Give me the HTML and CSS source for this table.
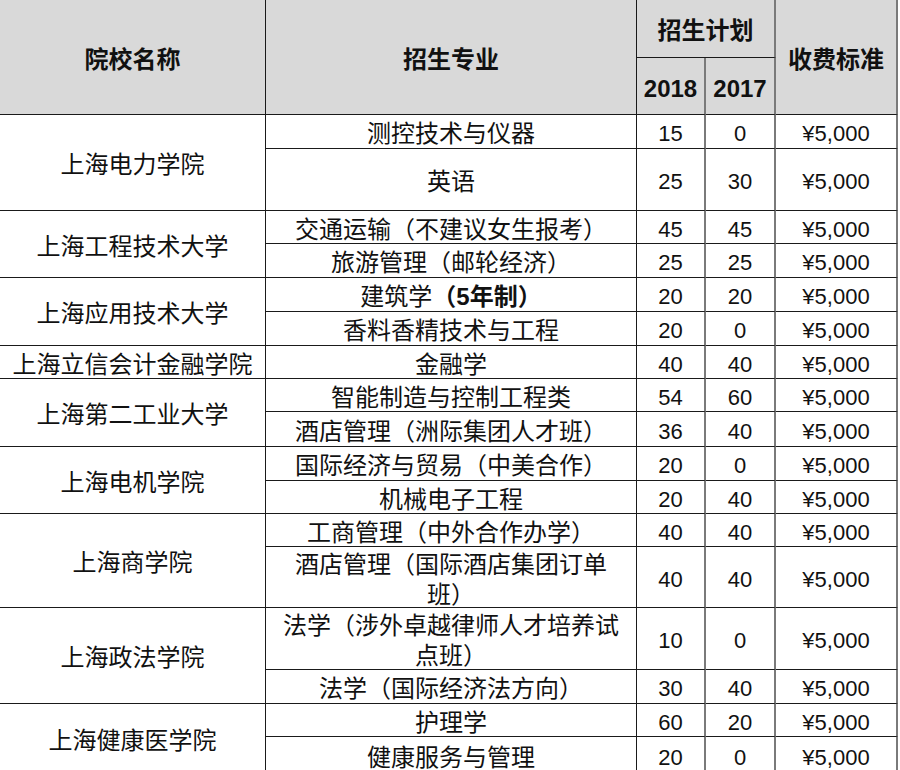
FILE: index.html
```html
<!DOCTYPE html>
<html lang="zh-CN">
<head>
<meta charset="utf-8">
<title>招生计划</title>
<link rel="stylesheet" href="styles.css">
</head>
<body>
<div class="sheet">
  <div class="c hd name">院校名称</div>
  <div class="c hd major">招生专业</div>
  <div class="c hd plan gv">招生计划</div>
  <div class="c hd fee gv">收费标准</div>
  <div class="c hd yr gv">2018</div>
  <div class="c hd yr gv">2017</div>

  <div class="c sch s2">上海电力学院</div>
  <div class="c">测控技术与仪器</div><div class="c num gv">15</div><div class="c num gv">0</div><div class="c num gv">¥5,000</div>
  <div class="c">英语</div><div class="c num gv">25</div><div class="c num gv">30</div><div class="c num gv">¥5,000</div>

  <div class="c sch s2">上海工程技术大学</div>
  <div class="c">交通运输（不建议女生报考）</div><div class="c num gv">45</div><div class="c num gv">45</div><div class="c num gv">¥5,000</div>
  <div class="c">旅游管理（邮轮经济）</div><div class="c num gv">25</div><div class="c num gv">25</div><div class="c num gv">¥5,000</div>

  <div class="c sch s2">上海应用技术大学</div>
  <div class="c">建筑学<b>（5年制）</b></div><div class="c num gv">20</div><div class="c num gv">20</div><div class="c num gv">¥5,000</div>
  <div class="c">香料香精技术与工程</div><div class="c num gv">20</div><div class="c num gv">0</div><div class="c num gv">¥5,000</div>

  <div class="c sch">上海立信会计金融学院</div>
  <div class="c">金融学</div><div class="c num gv">40</div><div class="c num gv">40</div><div class="c num gv">¥5,000</div>

  <div class="c sch s2">上海第二工业大学</div>
  <div class="c">智能制造与控制工程类</div><div class="c num gv">54</div><div class="c num gv">60</div><div class="c num gv">¥5,000</div>
  <div class="c">酒店管理（洲际集团人才班）</div><div class="c num gv">36</div><div class="c num gv">40</div><div class="c num gv">¥5,000</div>

  <div class="c sch s2">上海电机学院</div>
  <div class="c">国际经济与贸易（中美合作）</div><div class="c num gv">20</div><div class="c num gv">0</div><div class="c num gv">¥5,000</div>
  <div class="c">机械电子工程</div><div class="c num gv">20</div><div class="c num gv">40</div><div class="c num gv">¥5,000</div>

  <div class="c sch s2">上海商学院</div>
  <div class="c">工商管理（中外合作办学）</div><div class="c num gv">40</div><div class="c num gv">40</div><div class="c num gv">¥5,000</div>
  <div class="c">酒店管理（国际酒店集团订单<br>班）</div><div class="c num gv">40</div><div class="c num gv">40</div><div class="c num gv">¥5,000</div>

  <div class="c sch s2">上海政法学院</div>
  <div class="c">法学（涉外卓越律师人才培养试<br>点班）</div><div class="c num gv">10</div><div class="c num gv">0</div><div class="c num gv">¥5,000</div>
  <div class="c">法学（国际经济法方向）</div><div class="c num gv">30</div><div class="c num gv">40</div><div class="c num gv">¥5,000</div>

  <div class="c sch s2">上海健康医学院</div>
  <div class="c">护理学</div><div class="c num gv">60</div><div class="c num gv">20</div><div class="c num gv">¥5,000</div>
  <div class="c">健康服务与管理</div><div class="c num gv">20</div><div class="c num gv">0</div><div class="c num gv">¥5,000</div>
</div>
</body>
</html>
```
FILE: styles.css
```css
html, body {
  margin: 0;
  padding: 0;
  background: #ffffff;
}
body {
  width: 900px;
  height: 770px;
  overflow: hidden;
  font-family: "Liberation Sans", "Noto Sans CJK SC", sans-serif;
  color: #111111;
}
.sheet {
  display: grid;
  width: 898px;
  grid-template-columns: 266px 371px 69px 70px 122px;
  grid-template-rows: 58px 57px 34px 62px 33px 34px 34px 34px 33px 33px 35px 34px 33px 33px 61px 62px 34px 33px 37px;
}
.c {
  box-sizing: border-box;
  display: flex;
  align-items: center;
  justify-content: center;
  text-align: center;
  font-size: 24px;
  line-height: 30px;
  border-right: 1px solid #1a1a1a;
  border-bottom: 1px solid #1a1a1a;
  padding-top: 5px;
}
.c b {
  font-weight: 700;
}
.gv {
  border-right: 2px solid #7a7a7a;
}
.hd {
  background: #d9d9d9;
  font-weight: 700;
}
.name {
  grid-row: 1 / span 2;
}
.major {
  grid-row: 1 / span 2;
}
.plan {
  grid-column: 3 / span 2;
}
.fee {
  grid-row: 1 / span 2;
  grid-column: 5;
}
.yr {
  font-size: 24px;
}
.sch {
  grid-column: 1;
}
.s2 {
  grid-row: span 2;
}
.num {
  font-size: 22px;
}
```
